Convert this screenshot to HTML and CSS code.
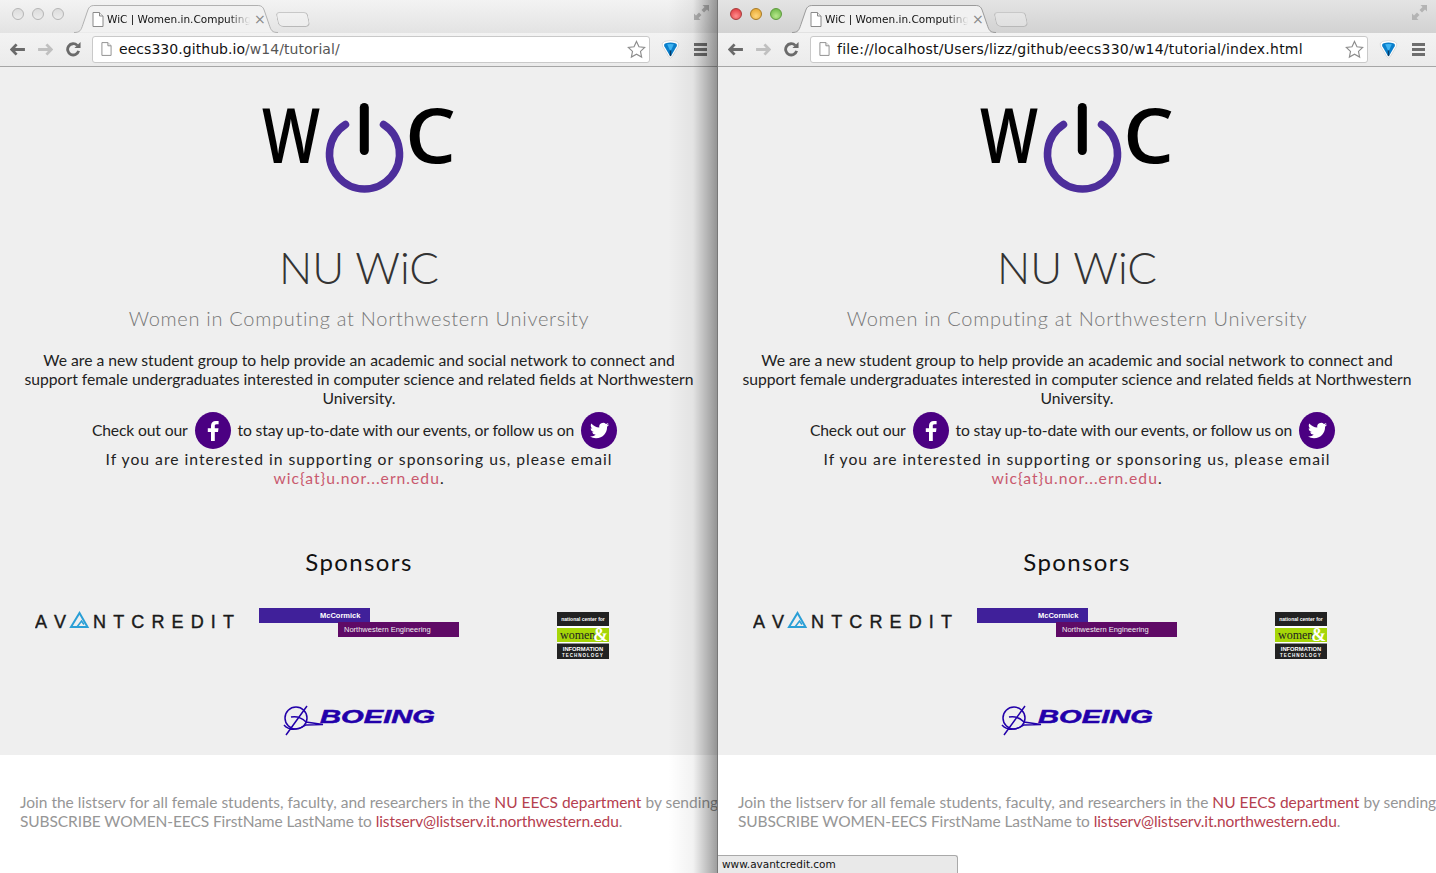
FILE: index.html
```html
<!DOCTYPE html>
<html lang="en">
<head>
    <meta charset="UTF-8">
    <title>WiC | Women.in.Computing</title>
    <link rel="stylesheet" href="styles.css">
</head>
<body>

    <!-- shared drawings, both windows show the same page -->
    <svg class="defs" aria-hidden="true">
        <symbol id="page-icon" viewBox="0 0 12 15">
            <path d="M1 .5h6.5L11 4v10.5H1z" fill="#fff" stroke="#8a8a8a"/>
            <path d="M7.5 .5V4H11" fill="#eee" stroke="#8a8a8a"/>
        </symbol>
        <symbol id="arrow" viewBox="0 0 16 14">
            <path d="M7 1.5 1.8 7 7 12.5M2 7h14" fill="none" stroke="currentColor" stroke-width="3"/>
        </symbol>
        <symbol id="reload" viewBox="0 0 16 16">
            <path d="M13.5 9.5A6 6 0 1 1 12 3.6" fill="none" stroke="currentColor" stroke-width="3"/>
            <path d="M9 6.5h6.5V0z" fill="currentColor"/>
        </symbol>
        <symbol id="star" viewBox="0 0 20 20">
            <path d="M10 1.5l2.6 5.6 6 .7-4.4 4.2 1.2 6L10 15l-5.400 3 1.200-6L1.400 7.800l6-.7z" fill="#fff" stroke="#8c8c8c" stroke-width="1.200"/>
        </symbol>
        <symbol id="gem" viewBox="0 0 20 20">
            <path d="M4 1.500Q10-.5 16 1.500Q20 3 18.500 6.500L11.500 18Q10 20 8.500 18L1.500 6.500Q0 3 4 1.500z" fill="#fff" stroke="#c4c4c4" stroke-width=".6"/>
            <path d="M5 3.500Q10 2 15 3.500Q17.500 4.500 16.500 6.500L11 16H9L3.500 6.500Q2.500 4.500 5 3.500z" fill="#0a7fcb"/>
            <path d="M6.500 4.500Q10 3.800 13.500 4.500L10.500 11H9.500z" fill="#3fb4f2"/>
            <path d="M9.200 11h1.600v6H9.200z" fill="#063a66"/>
        </symbol>
        <symbol id="expand" viewBox="0 0 15 15">
            <path d="M8.500 0H15v6.500L13 4.500 10 7.500 7.500 5l3-3zM6.500 15H0V8.500L2 10.500 5 7.500 7.500 10l-3 3z" fill="#b4b4b4"/>
        </symbol>
        <symbol id="wic-logo" viewBox="0 0 200 100">
            <text class="logo-letter" x="3" y="65" textLength="58" lengthAdjust="spacingAndGlyphs">W</text>
            <text class="logo-letter" x="146" y="65" textLength="51" lengthAdjust="spacingAndGlyphs">C</text>
            <path d="M86.500 26.500A35 35 0 1 0 124.500 26.500" fill="none" stroke="#4d2e9b" stroke-width="7.500" stroke-linecap="round"/>
            <path d="M105.300 9.500v43" stroke="#000" stroke-width="9" stroke-linecap="round"/>
        </symbol>
        <symbol id="avant-logo" viewBox="0 0 200 26">
            <text class="avant-text" x="0" y="20" textLength="31">AV</text>
            <path d="M36 19 44.500 5l8 14z" fill="none" stroke="#2a9fd6" stroke-width="2"/>
            <path d="M42 19l4.500-6 2.500 3.500" fill="none" stroke="#2a9fd6" stroke-width="1.600"/>
            <text class="avant-text" x="58" y="20" textLength="141">NTCREDIT</text>
        </symbol>
        <symbol id="mccormick-logo" viewBox="0 0 200 29">
            <rect width="111" height="15" fill="#40209a"/>
            <rect x="79" y="14" width="121" height="15" fill="#5f0a66"/>
            <text class="mcc-name" x="61" y="9.500">McCormick</text>
            <text class="mcc-sub" x="85" y="24">Northwestern Engineering</text>
        </symbol>
        <symbol id="ncwit-logo" viewBox="0 0 52 47">
            <rect width="52" height="47" fill="#fff"/>
            <rect width="52" height="14" fill="#222"/>
            <rect y="16" width="52" height="14" fill="#a6d608"/>
            <rect y="31.500" width="52" height="15.500" fill="#222"/>
            <text class="ncwit-small" x="26" y="9">national center for</text>
            <text class="ncwit-women" x="3" y="27">women</text>
            <text class="ncwit-amp" x="36" y="29">&amp;</text>
            <text class="ncwit-small ncwit-info" x="26" y="38.500">INFORMATION</text>
            <text class="ncwit-small ncwit-wide" x="26" y="44.500">TECHNOLOGY</text>
        </symbol>
        <symbol id="boeing-logo" viewBox="0 0 152 32">
            <circle cx="13" cy="14" r="11" fill="none" stroke="#2200aa" stroke-width="1.500"/>
            <path d="M24 2 3 31M1 21c6 7 16 4 22 0l17-.5-17-2.500C19 14 13 12 8 13" fill="none" stroke="#2200aa" stroke-width="1.500"/>
            <text class="boeing-text" x="37" y="19" textLength="115" lengthAdjust="spacingAndGlyphs">BOEING</text>
        </symbol>
        <symbol id="fb-icon" viewBox="0 0 36 36">
            <path d="M19.800 28V19h3.200l.5-3.700h-3.700V13c0-1.100.3-1.800 1.800-1.800h2V8c-.4 0-1.500-.1-2.800-.1-2.800 0-4.800 1.700-4.800 4.900v2.500h-3.200V19H16v9z" fill="#fff"/>
        </symbol>
        <symbol id="tw-icon" viewBox="0 0 24 24">
            <path d="M23.950 4.570a10 10 0 0 1-2.820.78 4.960 4.960 0 0 0 2.160-2.730c-.95.560-2 .960-3.130 1.190a4.920 4.920 0 0 0-8.380 4.480C7.690 8.100 4.070 6.130 1.640 3.160a4.820 4.820 0 0 0-.67 2.480c0 1.710.87 3.210 2.190 4.100a4.900 4.900 0 0 1-2.230-.62v.06a4.920 4.920 0 0 0 3.950 4.830 5 5 0 0 1-2.210.08 4.940 4.940 0 0 0 4.600 3.420 9.870 9.870 0 0 1-6.100 2.100c-.39 0-.78-.02-1.170-.06a14 14 0 0 0 7.560 2.210c9.050 0 14-7.500 14-13.990 0-.21 0-.42-.02-.63A9.940 9.940 0 0 0 24 4.590z" fill="#fff"/>
        </symbol>
    </svg>

    <div class="desktop">

        <div class="window window-back">
            <div class="tabstrip">
                <div class="lights">
                    <span class="light"></span>
                    <span class="light"></span>
                    <span class="light"></span>
                </div>
                <div class="tab">
                    <svg class="tab-shape" viewBox="0 0 206 28" preserveAspectRatio="none"><path d="M0 27.500c6 0 7-2 9-8L14 5c1-3 3-4.500 6-4.500h166c3 0 5 1.500 6 4.500l5 14.500c2 6 3 8 9 8" fill="#f1f1f1" stroke="#b0b0b0"/></svg>
                    <svg class="tab-page"><use href="#page-icon"/></svg>
                    <span class="tab-title">WiC | Women.in.Computing</span>
                    <span class="tab-close">×</span>
                </div>
                <span class="new-tab"></span>
                <svg class="expand"><use href="#expand"/></svg>
            </div>
            <div class="toolbar">
                <svg class="tool-arrow"><use href="#arrow"/></svg>
                <svg class="tool-arrow tool-forward"><use href="#arrow"/></svg>
                <svg class="tool-reload"><use href="#reload"/></svg>
                <div class="omnibox">
                    <svg class="omni-page"><use href="#page-icon"/></svg>
                    <span class="url"><b>eecs330.github.io</b>/w14/tutorial/</span>
                    <svg class="omni-star"><use href="#star"/></svg>
                </div>
                <svg class="tool-gem"><use href="#gem"/></svg>
                <div class="tool-menu"><i></i><i></i><i></i></div>
            </div>
            <div class="page">
                <div class="hero">
                    <svg class="wic-logo"><use href="#wic-logo"/></svg>
                    <h1>NU WiC</h1>
                    <h3>Women in Computing at Northwestern University</h3>
                    <p class="intro">We are a new student group to help provide an academic and social network to connect and support female undergraduates interested in computer science and related fields at Northwestern University.</p>
                    <p class="social">Check out our
                        <a class="round-icon"><svg><use href="#fb-icon"/></svg></a>
                        to stay up-to-date with our events, or follow us on
                        <a class="round-icon"><svg class="bird"><use href="#tw-icon"/></svg></a>
                    </p>
                    <p class="contact">If you are interested in supporting or sponsoring us, please email <a>wic{at}u.nor...ern.edu</a>.</p>
                    <h2>Sponsors</h2>
                    <div class="sponsors">
                        <svg class="avant"><use href="#avant-logo"/></svg>
                        <svg class="mccormick"><use href="#mccormick-logo"/></svg>
                        <svg class="ncwit"><use href="#ncwit-logo"/></svg>
                    </div>
                    <svg class="boeing"><use href="#boeing-logo"/></svg>
                </div>
                <div class="footer">
                    <p>Join the listserv for all female students, faculty, and researchers in the <a>NU EECS department</a> by sending</p>
                    <p class="footer-caps">SUBSCRIBE WOMEN-EECS FirstName LastName to <a>listserv@listserv.it.northwestern.edu</a>.</p>
                </div>
            </div>
            <div class="edge-shadow"></div>
        </div>

        <div class="window window-front">
            <div class="tabstrip">
                <div class="lights">
                    <span class="light red"></span>
                    <span class="light yellow"></span>
                    <span class="light green"></span>
                </div>
                <div class="tab">
                    <svg class="tab-shape" viewBox="0 0 206 28" preserveAspectRatio="none"><path d="M0 27.500c6 0 7-2 9-8L14 5c1-3 3-4.500 6-4.500h166c3 0 5 1.500 6 4.500l5 14.500c2 6 3 8 9 8" fill="#f1f1f1" stroke="#9a9a9a"/></svg>
                    <svg class="tab-page"><use href="#page-icon"/></svg>
                    <span class="tab-title">WiC | Women.in.Computing</span>
                    <span class="tab-close">×</span>
                </div>
                <span class="new-tab"></span>
                <svg class="expand"><use href="#expand"/></svg>
            </div>
            <div class="toolbar">
                <svg class="tool-arrow"><use href="#arrow"/></svg>
                <svg class="tool-arrow tool-forward"><use href="#arrow"/></svg>
                <svg class="tool-reload"><use href="#reload"/></svg>
                <div class="omnibox">
                    <svg class="omni-page"><use href="#page-icon"/></svg>
                    <span class="url"><b>file://localhost/Users/lizz/github/eecs330/w14/tutorial/index.html</b></span>
                    <svg class="omni-star"><use href="#star"/></svg>
                </div>
                <svg class="tool-gem"><use href="#gem"/></svg>
                <div class="tool-menu"><i></i><i></i><i></i></div>
            </div>
            <div class="page">
                <div class="hero">
                    <svg class="wic-logo"><use href="#wic-logo"/></svg>
                    <h1>NU WiC</h1>
                    <h3>Women in Computing at Northwestern University</h3>
                    <p class="intro">We are a new student group to help provide an academic and social network to connect and support female undergraduates interested in computer science and related fields at Northwestern University.</p>
                    <p class="social">Check out our
                        <a class="round-icon"><svg><use href="#fb-icon"/></svg></a>
                        to stay up-to-date with our events, or follow us on
                        <a class="round-icon"><svg class="bird"><use href="#tw-icon"/></svg></a>
                    </p>
                    <p class="contact">If you are interested in supporting or sponsoring us, please email <a>wic{at}u.nor...ern.edu</a>.</p>
                    <h2>Sponsors</h2>
                    <div class="sponsors">
                        <svg class="avant"><use href="#avant-logo"/></svg>
                        <svg class="mccormick"><use href="#mccormick-logo"/></svg>
                        <svg class="ncwit"><use href="#ncwit-logo"/></svg>
                    </div>
                    <svg class="boeing"><use href="#boeing-logo"/></svg>
                </div>
                <div class="footer">
                    <p>Join the listserv for all female students, faculty, and researchers in the <a>NU EECS department</a> by sending</p>
                    <p class="footer-caps">SUBSCRIBE WOMEN-EECS FirstName LastName to <a>listserv@listserv.it.northwestern.edu</a>.</p>
                </div>
            </div>
            <div class="status-bubble">www.avantcredit.com</div>
        </div>

    </div>

</body>
</html>
```

FILE: styles.css
```css
* {
    box-sizing: border-box;
}

html, body {
    margin: 0;
    padding: 0;
    height: 100%;
    overflow: hidden;
}

body {
    font-family: 'Lato', sans-serif;
    background-color: #ffffff;
}

.defs {
    position: absolute;
    width: 0;
    height: 0;
}

.desktop {
    display: flex;
    width: 1436px;
    height: 873px;
}

.window {
    position: relative;
    display: flex;
    flex-direction: column;
    width: 718px;
    height: 873px;
    overflow: hidden;
}

/* browser chrome */
.tabstrip {
    display: flex;
    align-items: flex-start;
    height: 33px;
    background: linear-gradient(#e4e4e4, #d2d2d2);
    padding-left: 12px;
}

.window-back .tabstrip {
    background: linear-gradient(#f3f3f3, #e3e3e3);
}

.lights {
    display: flex;
    gap: 8px;
    padding-top: 8px;
    width: 62px;
}

.light {
    width: 12px;
    height: 12px;
    border-radius: 50%;
    border: 1px solid #b5b5b5;
    background: linear-gradient(#dcdcdc, #ececec);
}

.light.red {
    border-color: #a83a3a;
    background: radial-gradient(circle at 50% 70%, #ff8d8d, #dc2f35);
}

.light.yellow {
    border-color: #a87a24;
    background: radial-gradient(circle at 50% 70%, #ffd67a, #e3a027);
}

.light.green {
    border-color: #5e9a3c;
    background: radial-gradient(circle at 50% 70%, #b7e88b, #62b13f);
}

.tab {
    position: relative;
    display: flex;
    align-items: center;
    width: 204px;
    height: 28px;
    margin-top: 5px;
    padding: 0 0 0 18px;
    margin-bottom: -1px;
}

.tab-shape {
    position: absolute;
    left: 0;
    top: 0;
    width: 100%;
    height: 100%;
}

.tab-page {
    position: relative;
    width: 12px;
    height: 15px;
    margin-right: 3px;
}

.tab-title {
    position: relative;
    width: 143px;
    overflow: hidden;
    white-space: nowrap;
    font-family: 'DejaVu Sans', sans-serif;
    font-size: 10.500px;
    color: #111;
    -webkit-mask-image: linear-gradient(to right, #000 85%, transparent);
    mask-image: linear-gradient(to right, #000 85%, transparent);
}

.tab-close {
    position: relative;
    margin-left: 4px;
    font-family: 'DejaVu Sans', sans-serif;
    font-size: 14px;
    line-height: 14px;
    color: #888;
}

.new-tab {
    width: 32px;
    height: 15px;
    margin: 12px 0 0 -1px;
    border: 1px solid #b8b8b8;
    border-top-color: #c8c8c8;
    border-radius: 4px 4px 5px 5px;
    transform: skewX(12deg);
    background-color: rgba(255, 255, 255, 0.25);
}

.expand {
    width: 15px;
    height: 15px;
    margin: 5px 0 0 auto;
    margin-right: 9px;
}

.toolbar {
    display: flex;
    align-items: center;
    height: 34px;
    padding: 0 10px 1px 10px;
    background: linear-gradient(#f3f3f3, #ebebeb);
    border-bottom: 1px solid #a6a6a6;
}

.tool-arrow {
    width: 15px;
    height: 13px;
    margin-right: 13px;
    color: #6a6a6a;
}

.tool-forward {
    color: #c0c0c0;
    transform: scaleX(-1);
}

.tool-reload {
    width: 15px;
    height: 15px;
    margin-right: 11px;
    color: #6a6a6a;
}

.omnibox {
    display: flex;
    align-items: center;
    width: 558px;
    height: 27px;
    padding: 0 3px 0 8px;
    background-color: #ffffff;
    border: 1px solid #c9c9c9;
    border-radius: 3px;
}

.omni-page {
    width: 11px;
    height: 14px;
    margin-right: 7px;
}

.url {
    flex: 1;
    font-family: 'DejaVu Sans', sans-serif;
    font-size: 14px;
    letter-spacing: 0.05px;
    color: #555;
    white-space: nowrap;
}

.window-front .url {
    letter-spacing: 0.22px;
}

.url b {
    font-weight: 400;
    color: #111;
}

.omni-star {
    width: 19px;
    height: 19px;
}

.tool-gem {
    width: 19px;
    height: 19px;
    margin-left: 11px;
}

.tool-menu {
    display: flex;
    flex-direction: column;
    gap: 2px;
    width: 13px;
    margin-left: 14px;
}

.tool-menu i {
    height: 3px;
    background-color: #6e6e6e;
}

/* the page itself */
.page {
    flex: 1;
    display: flex;
    flex-direction: column;
    background-color: #ffffff;
}

.hero {
    display: flex;
    flex-direction: column;
    align-items: center;
    height: 688px;
    padding: 31px 20px 0;
    background-color: #efefef;
    text-align: center;
}

.wic-logo {
    width: 200px;
    height: 100px;
}

.logo-letter {
    font-family: 'Open Sans', sans-serif;
    font-size: 76px;
    font-weight: 600;
    fill: #000;
}

h1 {
    margin: 41px 0 0;
    font-size: 44px;
    line-height: 56px;
    font-weight: 300;
    color: #333;
}

h3 {
    margin: 8px 0 0;
    font-size: 20px;
    line-height: 30px;
    font-weight: 300;
    letter-spacing: 0.7px;
    color: #777;
}

p {
    margin: 0;
}

.intro, .social, .contact {
    font-size: 15.700px;
    line-height: 19px;
    color: #222;
}

.intro {
    margin-top: 18px;
    width: 678px;
}

.social {
    display: flex;
    align-items: center;
    gap: 7px;
    margin-top: 4px;
    padding-right: 9px;
    height: 37px;
    letter-spacing: -0.15px;
}

.round-icon {
    display: flex;
    align-items: center;
    justify-content: center;
    width: 36px;
    height: 37px;
    border-radius: 50%;
    background-color: #4b0082;
}

.round-icon svg {
    width: 36px;
    height: 36px;
}

.round-icon .bird {
    width: 19px;
    height: 19px;
}

.contact {
    width: 560px;
    margin-top: 1px;
    letter-spacing: 1px;
}

.contact a {
    color: #c9596e;
}

h2 {
    margin: 57px 0 0;
    font-size: 24px;
    line-height: 34px;
    font-weight: 400;
    letter-spacing: 1.400px;
    color: #111;
}

.sponsors {
    display: grid;
    grid-template-columns: repeat(3, 224px);
    justify-items: center;
    align-items: start;
    margin-top: 29px;
}

.avant {
    width: 200px;
    height: 26px;
}

.avant-text {
    font-family: 'Liberation Sans', sans-serif;
    font-size: 18px;
    fill: #1a1a1a;
    stroke: #1a1a1a;
    stroke-width: 0.400;
}

.mccormick {
    width: 200px;
    height: 29px;
}

.mcc-name {
    font-family: 'Liberation Sans', sans-serif;
    font-size: 7.500px;
    font-weight: 700;
    fill: #fff;
}

.mcc-sub {
    font-family: 'Liberation Sans', sans-serif;
    font-size: 7.500px;
    fill: #eee;
}

.ncwit {
    width: 52px;
    height: 47px;
    margin-top: 4px;
}

.ncwit-small {
    font-family: 'Liberation Sans', sans-serif;
    font-size: 5px;
    font-weight: 700;
    fill: #fff;
    text-anchor: middle;
}

.ncwit-info {
    font-size: 5.800px;
}

.ncwit-wide {
    font-size: 4.500px;
    letter-spacing: 1px;
}

.ncwit-women {
    font-family: 'Liberation Serif', serif;
    font-size: 12px;
    fill: #222;
}

.ncwit-amp {
    font-family: 'Liberation Serif', serif;
    font-size: 18px;
    font-weight: 700;
    fill: #fff;
}

.boeing {
    width: 152px;
    height: 32px;
    margin-top: 45px;
}

.boeing-text {
    font-family: 'Liberation Sans', sans-serif;
    font-size: 19px;
    font-weight: 700;
    font-style: italic;
    fill: #2200aa;
    stroke: #2200aa;
    stroke-width: 0.500;
}

.footer {
    padding: 38px 0 0 20px;
    font-size: 15.500px;
    line-height: 19px;
    color: #969696;
    white-space: nowrap;
}

.footer-caps {
    letter-spacing: -0.1px;
}

.footer a {
    color: #b5404f;
}

/* shadow the front window throws on the back one */
.edge-shadow {
    position: absolute;
    top: 0;
    right: 0;
    width: 50px;
    height: 100%;
    background: linear-gradient(to right, rgba(0, 0, 0, 0), rgba(0, 0, 0, 0.05) 50%, rgba(0, 0, 0, 0.38) 98%, #777 98%);
}

.status-bubble {
    position: absolute;
    left: 0;
    bottom: 0;
    width: 240px;
    height: 18px;
    padding: 1px 4px;
    background-color: #e9e9e9;
    border: 1px solid #a9a9a9;
    border-bottom: none;
    border-left: none;
    border-radius: 0 3px 0 0;
    font-family: 'DejaVu Sans', sans-serif;
    font-size: 10.500px;
    line-height: 14px;
    color: #111;
}
```
